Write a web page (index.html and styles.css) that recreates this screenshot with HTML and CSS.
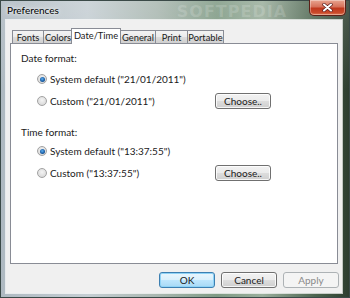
FILE: index.html
```html
<!DOCTYPE html>
<html lang="en">
<head>
    <meta charset="UTF-8">
    <title>Preferences</title>
    <link rel="stylesheet" href="styles.css">
</head>
<body>
    <div class="window">
        <div class="titlebar">
            <span class="title">Preferences</span>
            <span class="watermark">SOFTPEDIA</span>
            <span class="close">
                <svg width="11" height="9" viewBox="0 0 11 9">
                    <path d="M2 1.5 L9 7.5 M9 1.5 L2 7.5" stroke="#5a2020" stroke-width="3.4" stroke-linecap="round"/>
                    <path d="M2 1.5 L9 7.5 M9 1.5 L2 7.5" stroke="#fff" stroke-width="2" stroke-linecap="round"/>
                </svg>
            </span>
        </div>

        <div class="client">
            <div class="tabs">
                <span class="tab tab-fonts">Fonts</span>
                <span class="tab tab-colors">Colors</span>
                <span class="tab tab-date active">Date/Time</span>
                <span class="tab tab-general">General</span>
                <span class="tab tab-print">Print</span>
                <span class="tab tab-portable">Portable</span>
            </div>

            <div class="panel">
                <div class="heading">Date format:</div>
                <div class="option">
                    <label class="radio-label"><span class="radio checked"></span>System default ("21/01/2011")</label>
                </div>
                <div class="option">
                    <label class="radio-label"><span class="radio"></span>Custom ("21/01/2011")</label>
                    <button class="btn">Choose..</button>
                </div>

                <div class="heading heading-time">Time format:</div>
                <div class="option">
                    <label class="radio-label"><span class="radio checked"></span>System default ("13:37:55")</label>
                </div>
                <div class="option">
                    <label class="radio-label"><span class="radio"></span>Custom ("13:37:55")</label>
                    <button class="btn">Choose..</button>
                </div>
            </div>

            <div class="actions">
                <button class="btn btn-default">OK</button>
                <button class="btn">Cancel</button>
                <button class="btn" disabled>Apply</button>
            </div>
        </div>
    </div>
</body>
</html>
```

FILE: styles.css
```css
* {
    margin: 0;
    padding: 0;
    box-sizing: border-box;
}

body {
    font-family: Lato, "Noto Sans", sans-serif;
    font-size: 10px;
    color: #1a1a1a;
    width: 350px;
    height: 298px;
    overflow: hidden;
}

/* Aero glass frame */
.window {
    width: 350px;
    height: 298px;
    display: flex;
    flex-direction: column;
    padding: 0 8px 6px 6px;
    background:
        linear-gradient(180deg, rgba(255, 255, 255, 0.15) 0%, rgba(0, 0, 0, 0) 30%),
        linear-gradient(90deg, #aeb9c1 0%, #c5ced3 25%, #a9b7b0 45%, #7f9a84 62%, #9aae9c 75%, #4d6550 90%, #2c3c2e 100%);
    box-shadow: inset 0 0 0 1px #3b4a48;
}

.titlebar {
    height: 20px;
    display: flex;
    align-items: flex-start;
}

.title {
    padding: 4px 0 0 1px;
    line-height: 13px;
    font-size: 10px;
    color: #000;
    text-shadow: 0 0 6px rgba(255, 255, 255, 0.9), 0 0 3px rgba(255, 255, 255, 0.9);
}

.watermark {
    margin-left: 118px;
    padding-top: 2px;
    font-family: "DejaVu Sans", sans-serif;
    font-weight: bold;
    font-size: 16px;
    letter-spacing: 1px;
    color: rgba(255, 255, 255, 0.16);
}

.close {
    margin-left: auto;
    margin-right: -4px;
    width: 37px;
    height: 16px;
    display: flex;
    align-items: center;
    justify-content: center;
    border: 1px solid #5b2018;
    border-top: none;
    border-radius: 0 0 5px 5px;
    background: linear-gradient(180deg, #e8a590 0%, #d6715a 45%, #c0381d 55%, #c94a2b 85%, #e0805a 100%);
    box-shadow: inset 0 0 0 1px rgba(255, 255, 255, 0.35);
}

.client {
    flex: 1;
    display: flex;
    flex-direction: column;
    background: #f0f0f0;
    padding: 8px 4px 5px 4px;
    box-shadow: 0 0 0 1px rgba(255, 255, 255, 0.7);
}

/* Tabs */
.tabs {
    display: flex;
    align-items: flex-end;
    height: 15px;
    padding-left: 2px;
    position: relative;
    z-index: 2;
}

.tab {
    height: 13px;
    line-height: 13px;
    font-size: 9.3px;
    text-align: center;
    border: 1px solid #898c95;
    border-bottom: none;
    margin-right: -1px;
    background: linear-gradient(180deg, #f3f3f3 0%, #ebebeb 50%, #dddddd 51%, #cfcfcf 100%);
}

.tab.active {
    height: 16px;
    margin: 0 -1px -1px -1px;
    background: #fff;
    line-height: 14px;
    position: relative;
}

.tab-fonts { width: 32px; }
.tab-colors { width: 30px; }
.tab-date { width: 50px; }
.tab-general { width: 36px; }
.tab-print { width: 33px; }
.tab-portable { width: 37px; }

/* Panel */
.panel {
    height: 221px;
    background: #fff;
    border: 1px solid #898c95;
    padding: 6px 0 0 10px;
}

.heading {
    line-height: 16px;
    height: 16px;
}

.heading-time {
    margin-top: 12px;
}

.option {
    height: 22px;
    display: grid;
    grid-template-columns: 178px 56px;
    align-items: center;
    padding-left: 16px;
}

.option:nth-of-type(2) {
    margin-top: 2px;
}

.radio-label {
    display: flex;
    align-items: center;
    gap: 3px;
}

.radio {
    width: 10px;
    height: 10px;
    border-radius: 50%;
    border: 1px solid #a2a2a2;
    background: radial-gradient(circle at 50% 40%, #f4f4f4 0%, #dcdcdc 70%, #cfcfcf 100%);
    display: flex;
    align-items: center;
    justify-content: center;
}

.radio.checked::after {
    content: "";
    width: 5px;
    height: 5px;
    border-radius: 50%;
    background: radial-gradient(circle at 45% 40%, #5fb1f0 0%, #1b5fa8 55%, #0d3a6e 100%);
}

/* Buttons */
.btn {
    font-family: inherit;
    font-size: 10px;
    height: 16px;
    width: 56px;
    line-height: 13px;
    border: 1px solid #707070;
    border-radius: 3px;
    color: #1a1a1a;
    background: linear-gradient(180deg, #f2f2f2 0%, #ebebeb 50%, #dddddd 51%, #cfcfcf 100%);
    box-shadow: inset 0 0 0 1px rgba(255, 255, 255, 0.8);
}

.btn-default {
    border-color: #3c7fb1;
    background: linear-gradient(180deg, #eaf6fd 0%, #d9f0fc 50%, #bee6fd 51%, #a7d9f5 100%);
    box-shadow: inset 0 0 0 1px #8fd3f6;
}

.btn:disabled {
    color: #8a8a8a;
    border-color: #adb2b5;
    background: #f4f4f4;
    box-shadow: none;
}

.actions {
    display: flex;
    justify-content: flex-end;
    gap: 6px;
    margin-top: 8px;
    margin-right: -1px;
}
```
